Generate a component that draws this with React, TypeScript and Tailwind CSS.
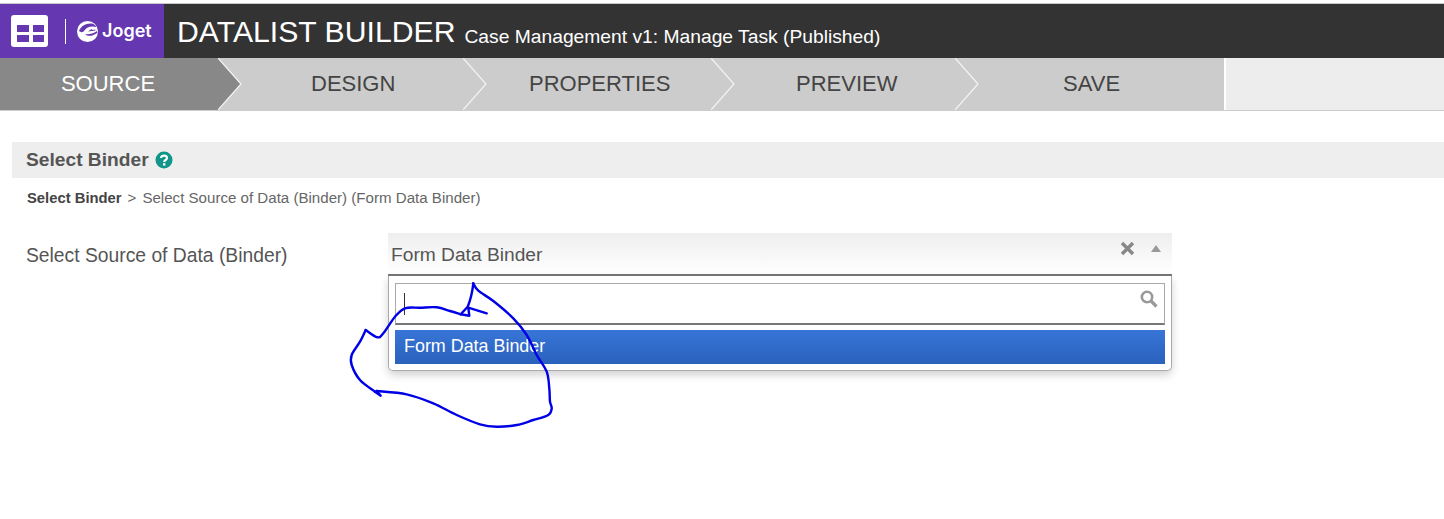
import React from "react";

const tabs = [
  { label: "DESIGN", w: "w-[245px]", text: "pl-[93px]" },
  { label: "PROPERTIES", w: "w-[248px]", text: "pl-[66px]" },
  { label: "PREVIEW", w: "w-[244px]", text: "pl-[85px]" },
  { label: "SAVE", w: "w-[269px]", text: "pl-[108px]" },
];

type P = [number, number];

function smooth(pts: P[]) {
  let d = `M${pts[0][0]} ${pts[0][1]}`;
  for (let i = 0; i < pts.length - 1; i++) {
    const p0 = pts[Math.max(i - 1, 0)];
    const p1 = pts[i];
    const p2 = pts[i + 1];
    const p3 = pts[Math.min(i + 2, pts.length - 1)];
    const c1x = p1[0] + (p2[0] - p0[0]) / 6;
    const c1y = p1[1] + (p2[1] - p0[1]) / 6;
    const c2x = p2[0] - (p3[0] - p1[0]) / 6;
    const c2y = p2[1] - (p3[1] - p1[1]) / 6;
    d += ` C${c1x} ${c1y} ${c2x} ${c2y} ${p2[0]} ${p2[1]}`;
  }
  return d;
}

const stroke1: P[] = [
  [473.3, 283.3], [478.3, 290.7], [493.3, 301], [513.3, 318.3], [526.7, 335], [536.7, 355], [546.7, 371.7],
  [549.3, 388.3], [550, 401.7], [551.7, 408.3], [548.3, 415], [533.3, 420], [516.7, 425], [496.7, 426.7],
  [480, 424.3], [456.7, 415], [433.3, 403.3], [406.7, 394.3], [376.7, 391],
];
const stroke2: P[] = [
  [375, 391.7], [360, 380], [351.7, 365], [351.7, 355], [360, 341.7], [365.7, 330],
];
const stroke3: P[] = [
  [365.7, 330], [377.3, 337.3], [383.3, 333.3], [395, 316.7], [405, 308.3], [420, 307.7], [436.7, 307.3], [450, 311], [460.7, 314.3],
];
const stroke4 =
  "M486.7 313.3 L468.3 307.7 L469.3 315.7 L460.7 314.3 L467.7 306.7 Q472 296 473.3 283.3 M376.7 391 L380.7 395.7 L375 391.7";

function Arrow({ dark }: { dark?: boolean }) {
  return (
    <svg className="absolute top-0 right-[-24px] z-10" width="24" height="52" viewBox="0 0 24 52">
      <path d="M0 0 L23 26 L0 52 Z" fill={dark ? "#888888" : "#cccccc"} />
      <path d="M0 0 L23 26 L0 52" fill="none" stroke="#f4f4f4" strokeWidth="1.2" />
    </svg>
  );
}

function Joget() {
  return (
    <svg width="21" height="21" viewBox="0 0 21 21" className="shrink-0">
      <circle cx="10.5" cy="10.5" r="10.5" fill="#ffffff" />
      <path d="M2 10 C4 5 9 2 15 2.6 C17 3.2 18.5 4.4 19.4 6 C14 4.4 9 6 6.6 10.5 C5 11.6 3.4 11.2 2 10 Z" fill="#6537b0" />
      <path d="M8 13.2 C12 13.6 16.5 12.6 20 10 L20.4 11.8 C16 15.4 11 15.8 8 13.2 Z" fill="#6537b0" />
      <path d="M11 10.6 L14.5 8 L15.5 9 L18 8.4 L18.6 9.6 Z" fill="#6537b0" />
    </svg>
  );
}

export default function App() {
  return (
    <div className="relative h-[519px] w-[1444px] overflow-hidden bg-white font-['Liberation_Sans',Arial,sans-serif]">
      <div className="h-[4px] border-b border-[#c8c8c8]" />
      <header className="flex h-[54px] items-center bg-[#333333] text-white">
        <div className="flex h-full w-[164px] shrink-0 items-center bg-[#6537b0] pl-[11px]">
          <div className="grid h-[32px] w-[37px] grid-cols-2 grid-rows-2 gap-x-[4px] gap-y-[3px] rounded-[3px] bg-white pb-[5px] pl-[6px] pr-[4px] pt-[10px]">
            <span className="bg-[#6537b0]" />
            <span className="bg-[#6537b0]" />
            <span className="bg-[#6537b0]" />
            <span className="bg-[#6537b0]" />
          </div>
          <div className="ml-[17px] mr-[11px] h-[25px] w-px bg-white" />
          <Joget />
          <span className="ml-[4px] font-['Inter',sans-serif] text-[18px] font-semibold leading-none">Joget</span>
        </div>
        <div className="ml-[13px] mt-[2px] text-[30.2px] leading-none">DATALIST BUILDER</div>
        <div className="ml-[9px] mt-[12px] text-[19.25px] leading-none">Case Management v1: Manage Task (Published)</div>
      </header>
      <nav className="flex h-[53px] border-b border-[#cccccc] bg-[#ededed]">
        <div className="relative flex w-[218px] items-center justify-center bg-[#888888] pb-[2px] pr-[2px] text-[22px] text-white">
          SOURCE
          <Arrow dark />
        </div>
        {tabs.map((t) => (
          <div key={t.label} className={`relative flex items-center bg-[#cccccc] pb-[2px] text-[22px] text-[#444444] ${t.w} ${t.text}`}>
            {t.label}
            {t.label !== "SAVE" && <Arrow />}
          </div>
        ))}
        <div className="w-[2px] bg-white" />
      </nav>
      <main className="pl-[12px] pt-[31px]">
        <div className="flex h-[36px] items-center bg-[#eeeeee] pl-[14px] text-[19.2px] font-bold text-[#555555]">
          Select Binder
          <svg className="ml-[6px]" width="18" height="18" viewBox="0 0 18 18">
            <circle cx="9" cy="9" r="8.5" fill="#0f9688" />
            <path d="M6 7 C6 3.8 12 3.8 12 7 C12 9 9.2 9 9.2 11" fill="none" stroke="#ffffff" strokeWidth="2.2" />
            <rect x="8" y="12.2" width="2.4" height="2.4" fill="#ffffff" />
          </svg>
        </div>
        <div className="mt-[12px] flex h-[16px] items-center pl-[15px] text-[15.1px] text-[#666666]">
          <b className="text-[14.8px] text-[#444444]">Select Binder</b>
          <span className="mx-[6px]">&gt;</span>
          Select Source of Data (Binder) (Form Data Binder)
        </div>
        <div className="mt-[27px] flex items-start">
          <label className="w-[376px] pl-[14px] pt-[12px] text-[19.3px] leading-[21px] text-[#555555]">Select Source of Data (Binder)</label>
          <div className="relative w-[784px]">
            <div className="relative flex h-[43px] items-center justify-between border-b-[2px] border-[#777777] bg-gradient-to-b from-[#eeeeee] to-white pl-[3px] pr-[11px] text-[19.2px] text-[#555555]">
              <span className="pt-[3px]">Form Data Binder</span>
              <div className="mb-[11px] flex items-center gap-[16px] text-[#888888]">
                <svg width="15" height="15" viewBox="0 0 15 15">
                  <path d="M2 2 L13 13 M13 2 L2 13" stroke="#888888" strokeWidth="3.4" />
                </svg>
                <svg width="10" height="7" viewBox="0 0 10 7">
                  <path d="M5 0 L10 7 L0 7 Z" fill="#999999" />
                </svg>
              </div>
            </div>
            <div className="absolute left-0 right-0 top-[43px] rounded-b-[5px] border border-t-0 border-[#aaaaaa] bg-white px-[6px] pb-[6px] pt-[7px] shadow-[0_4px_8px_rgba(0,0,0,0.18)]">
              <div className="relative h-[42px] border border-b-[2px] border-[#aaaaaa] border-b-[#777777]">
                <span className="absolute left-[8px] top-[9px] h-[22px] w-px bg-[#333333]" />
                <svg className="absolute right-[6px] top-[6px]" width="18" height="18" viewBox="0 0 18 18">
                  <circle cx="7" cy="7" r="5.2" fill="none" stroke="#999999" strokeWidth="2.6" />
                  <path d="M11 11 L16.5 16.5" stroke="#999999" strokeWidth="3.2" />
                </svg>
              </div>
              <div className="mt-[5px] flex h-[34px] items-center bg-gradient-to-b from-[#3875d7] to-[#2a62bc] pb-[2px] pl-[9px] text-[17.9px] text-white">
                Form Data Binder
              </div>
            </div>
          </div>
        </div>
      </main>
      <svg className="pointer-events-none absolute left-0 top-0 z-20" width="1444" height="519" viewBox="0 0 1444 519">
        <g fill="none" stroke="#0000e6" strokeWidth="2.4" strokeLinejoin="round" strokeLinecap="round">
          <path d={smooth(stroke1)} />
          <path d={smooth(stroke2)} />
          <path d={smooth(stroke3)} />
          <path d={stroke4} />
        </g>
      </svg>
    </div>
  );
}
